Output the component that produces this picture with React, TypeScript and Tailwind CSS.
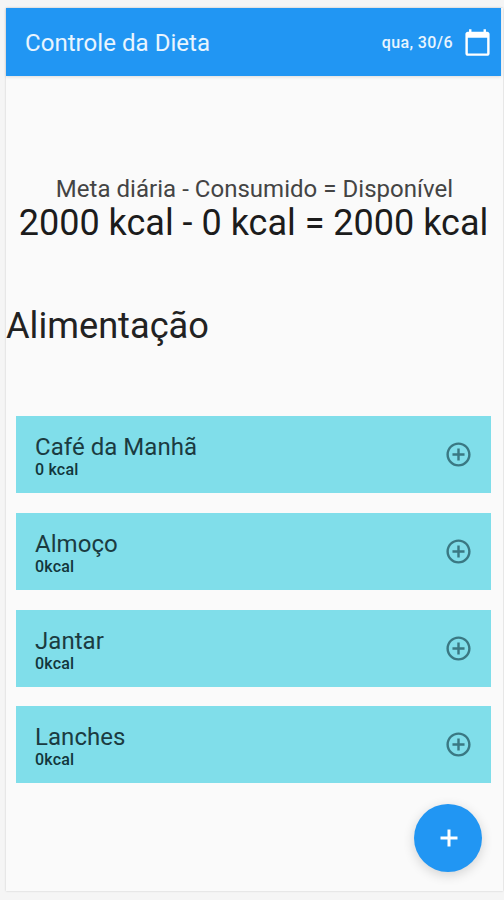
import { MdAddCircleOutline, MdCalendarToday } from "react-icons/md";

type Meal = { name: string; kcal: string };

const meals: Meal[] = [
  { name: "Café da Manhã", kcal: "0 kcal" },
  { name: "Almoço", kcal: "0kcal" },
  { name: "Jantar", kcal: "0kcal" },
  { name: "Lanches", kcal: "0kcal" },
];

function TopBar() {
  return (
    <header className="flex h-[68px] w-[495px] shrink-0 items-center bg-[#2196f3] pl-[19px] pr-[9px] text-white shadow-[0_1px_3px_rgba(0,0,0,0.12)]">
      <h1 className="flex-1 pt-0.5 text-[24px] leading-7 tracking-[0.05px] text-white/90">Controle da Dieta</h1>
      <span className="mr-[10px] pt-px text-base leading-5 font-medium tracking-[0.4px] text-white/90">qua, 30/6</span>
      <button type="button" aria-label="Escolher data">
        <MdCalendarToday className="size-[29px]" />
      </button>
    </header>
  );
}

function Summary() {
  return (
    <section className="mt-[99px] flex flex-col items-center whitespace-nowrap">
      <p className="text-[24px] leading-7 tracking-[0.03px] text-[#444]">Meta diária - Consumido = Disponível</p>
      <p className="mr-0.5 text-[36px] leading-10 text-[#1c1c1c]">2000 kcal - 0 kcal = 2000 kcal</p>
    </section>
  );
}

function MealCard({ meal }: { meal: Meal }) {
  return (
    <li className="flex h-[77px] items-center justify-between bg-[#80deea] pl-[19px] pr-[18px]">
      <div className="pt-[3px]">
        <h3 className="text-[24px] leading-7 tracking-[0.05px] text-[#1b3b41]">{meal.name}</h3>
        <p className="text-base leading-[18px] font-medium tracking-[0.2px] text-[#12363c]">{meal.kcal}</p>
      </div>
      <button type="button" aria-label={`Adicionar em ${meal.name}`}>
        <MdAddCircleOutline className="size-[29px] text-[#3a7883]" />
      </button>
    </li>
  );
}

export default function App() {
  return (
    <div className="h-[900px] w-[504px] overflow-hidden bg-[#f5f5f5] pl-[6px] pt-2 font-['Roboto',sans-serif]">
      <main className="relative flex h-[883px] w-[497px] flex-col bg-[#fafafa] shadow-[0_0_2px_rgba(0,0,0,0.18)]">
        <TopBar />
        <Summary />
        <h2 className="mt-[61px] text-[36.2px] leading-[44px] text-[#222]">Alimentação</h2>
        <ul className="ml-[10px] mt-[68px] flex w-[475px] flex-col gap-[19.8px]">
          {meals.map((meal) => (
            <MealCard key={meal.name} meal={meal} />
          ))}
        </ul>
        <button
          type="button"
          aria-label="Adicionar"
          className="absolute bottom-[19px] right-[21px] flex size-[68px] items-center justify-center rounded-full bg-[#2196f3] text-white shadow-[0_3px_12px_rgba(0,0,0,0.16)]"
        >
          <svg viewBox="0 0 18 18" className="ml-px size-[18px]" fill="none" stroke="currentColor" strokeWidth="3">
            <path d="M9 0.5v17M0.5 9h17" />
          </svg>
        </button>
      </main>
    </div>
  );
}
